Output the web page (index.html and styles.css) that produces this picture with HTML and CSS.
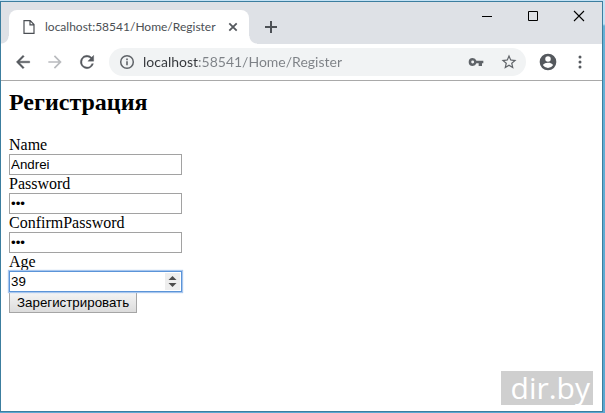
FILE: index.html
```html
<!DOCTYPE html>
<html lang="ru">
<head>
<meta charset="utf-8">
<title>Регистрация</title>
<link rel="stylesheet" href="styles.css">
</head>
<body>
<div class="window">
  <header class="tabstrip">
    <div class="tab">
      <svg class="icon" width="16" height="16" viewBox="0 0 16 16" fill="none" stroke="#4b4f54" stroke-width="1.2"><path d="M3 1.600h6.200L13 5.500v8.900H3zM9 1.800v4h4"/></svg>
      <span class="tab-title">localhost:58541/Home/Register</span>
      <button class="plain" type="button" aria-label="Close tab"><svg width="16" height="16" viewBox="0 0 16 16" stroke="#55595e" stroke-width="1.8"><path d="M4.300 4.300l7.400 7.400M11.700 4.300l-7.400 7.400"/></svg></button>
    </div>
    <button class="plain new-tab" type="button" aria-label="New tab"><svg width="16" height="16" viewBox="0 0 16 16" stroke="#4d5156" stroke-width="2"><path d="M8 2v12M2 8h12"/></svg></button>
    <div class="caption">
      <button class="plain" type="button" aria-label="Minimize"><svg width="12" height="12" viewBox="0 0 12 12" stroke="#000"><path d="M1 6.500h10"/></svg></button>
      <button class="plain" type="button" aria-label="Maximize"><svg width="12" height="12" viewBox="0 0 12 12" fill="none" stroke="#000"><path d="M1.500 1.500h9v9h-9z"/></svg></button>
      <button class="plain" type="button" aria-label="Close"><svg width="12" height="12" viewBox="0 0 12 12" stroke="#000" stroke-width="1.1"><path d="M1 1l10 10M11 1L1 11"/></svg></button>
    </div>
  </header>
  <nav class="toolbar">
    <button class="plain" type="button" aria-label="Back"><svg width="20" height="20" viewBox="0 0 24 24" fill="#55595e"><path d="M20 11H7.800l5.600-5.600L12 4l-8 8 8 8 1.400-1.400L7.800 13H20z" stroke="#55595e" stroke-width=".5"/></svg></button>
    <button class="plain" type="button" aria-label="Forward"><svg width="20" height="20" viewBox="0 0 24 24" fill="#b9bbbe"><path d="M12 4l-1.400 1.400 5.600 5.600H4v2h12.200l-5.600 5.600L12 20l8-8z"/></svg></button>
    <button class="plain" type="button" aria-label="Reload"><svg width="20" height="20" viewBox="0 0 24 24" fill="#55595e"><path d="M17.650 6.350A8 8 0 1 0 19.730 14h-2.080A6 6 0 1 1 12 6c1.660 0 3.140.69 4.220 1.780L13 11h7V4z" stroke="#55595e" stroke-width=".4"/></svg></button>
    <div class="omnibox">
      <svg class="icon" width="16" height="16" viewBox="0 0 16 16"><circle cx="8" cy="8" r="6.300" fill="none" stroke="#5f6368" stroke-width="1.500"/><path d="M7.200 7.200h1.600v4H7.200zM7.200 4.600h1.600v1.600H7.200z" fill="#5f6368"/></svg>
      <input class="url" type="text" aria-label="Address" value="localhost:58541/Home/Register">
      <button class="plain" type="button" aria-label="Saved passwords"><svg width="16" height="16" viewBox="0 0 24 24" fill="#5f6368"><path d="M12.650 10A6 6 0 0 0 7 6a6 6 0 0 0 0 12 6 6 0 0 0 5.650-4H16v4h5v-4h2v-4zM7 14.200a2.200 2.200 0 1 1 0-4.400 2.200 2.200 0 0 1 0 4.400z"/></svg></button>
      <button class="plain" type="button" aria-label="Bookmark"><svg width="18" height="18" viewBox="0 0 24 24" fill="#5f6368"><path d="M22 9.240l-7.190-.62L12 2 9.190 8.630 2 9.240l5.460 4.730L5.820 21 12 17.270 18.180 21l-1.630-7.030zM12 15.400l-3.760 2.270 1-4.280-3.320-2.880 4.380-.38L12 6.100l1.710 4.040 4.380.38-3.320 2.880 1 4.280z"/></svg></button>
    </div>
    <button class="plain" type="button" aria-label="Profile"><svg width="20" height="20" viewBox="0 0 24 24" fill="#55595e"><path d="M12 2a10 10 0 1 0 0 20 10 10 0 0 0 0-20zm0 3a3.300 3.300 0 1 1 0 6.600A3.300 3.300 0 0 1 12 5zm0 14.200a7.200 7.200 0 0 1-6-3.220c.03-1.990 4-3.080 6-3.080s5.970 1.090 6 3.080a7.200 7.200 0 0 1-6 3.220z"/></svg></button>
    <button class="plain menu" type="button" aria-label="Menu"><svg width="16" height="16" viewBox="0 0 16 16" fill="#55595e"><circle cx="8" cy="3" r="1.500"/><circle cx="8" cy="8" r="1.500"/><circle cx="8" cy="13" r="1.500"/></svg></button>
  </nav>
  <main class="page">
    <h2>Регистрация</h2>
    <form>
      <label for="name">Name</label>
      <input class="field" id="name" type="text" value="Andrei">
      <label for="password">Password</label>
      <input class="field" id="password" type="password" value="123">
      <label for="confirm">ConfirmPassword</label>
      <input class="field" id="confirm" type="password" value="123">
      <label for="age">Age</label>
      <div class="number">
        <input class="field active" id="age" type="number" value="39">
        <svg class="spinner" width="15" height="17" viewBox="0 0 15 17"><path fill="#eee" d="M0 0h15v17H0z"/><path fill="#4c4c4c" d="M3.500 7L7.500 3l4 4zM3.500 10h8l-4 4z"/></svg>
      </div>
      <button class="submit" type="submit">Зарегистрировать</button>
    </form>
  </main>
  <div class="watermark">dir.by</div>
</div>
</body>
</html>
```
FILE: styles.css
```css
* {
  box-sizing: border-box;
}

body {
  margin: 0;
  height: 100vh;
  padding: 1px 2px 1px 0;
  background: linear-gradient(#c3e2f5 0, #c3e2f5 24px, #67b1d6 26px, #5ba7d0 100%);
  font-family: "Liberation Serif", serif;
}

.window {
  position: relative;
  display: flex;
  flex-direction: column;
  height: 100%;
  border: 1px solid #3c7e9f;
  background: #fff;
}

.icon {
  flex: none;
}

.plain {
  display: flex;
  flex: none;
  align-items: center;
  justify-content: center;
  padding: 0;
  border: 0;
  background: none;
}

.tabstrip {
  display: flex;
  height: 42px;
  padding: 8px 0 0 8px;
  background: #dee1e6;
}

.tab {
  position: relative;
  display: flex;
  align-items: center;
  gap: 8px;
  width: 240px;
  padding: 0 8px 0 12px;
  border-radius: 8px 8px 0 0;
  background: #fff;
}

.tab::before,
.tab::after {
  content: "";
  position: absolute;
  bottom: 0;
  width: 8px;
  height: 8px;
}

.tab::before {
  right: 100%;
  background: radial-gradient(circle at 0 0, transparent 7px, #fff 8px);
}

.tab::after {
  left: 100%;
  background: radial-gradient(circle at 100% 0, transparent 7px, #fff 8px);
}

.tab-title {
  flex: 1;
  white-space: nowrap;
  color: #4b4f54;
  font: 12px/16px Lato, sans-serif;
}

.new-tab {
  width: 44px;
}

.caption {
  display: flex;
  align-items: flex-start;
  margin-left: auto;
}

.caption .plain {
  width: 46px;
  height: 12px;
}

.toolbar {
  display: flex;
  align-items: center;
  gap: 12px;
  height: 37px;
  padding: 0 14px 0 12px;
  border-bottom: 1px solid #a9a9a9;
}

.omnibox {
  display: flex;
  flex: 1;
  align-items: center;
  gap: 8px;
  min-width: 0;
  height: 28px;
  padding: 0 8px 0 10px;
  border-radius: 14px;
  background: #f1f3f4;
}

.omnibox .plain + .plain {
  margin-left: 8px;
}

.menu {
  margin-left: 2px;
}

.url {
  flex: 1;
  min-width: 0;
  padding: 0;
  border: 0;
  outline: 0;
  /* host in dark text, port and path in grey */
  background: linear-gradient(90deg, #33363a 56px, #7d8186 56px) text;
  color: transparent;
  font: 14px/20px Lato, sans-serif;
}

.page {
  padding: 8px;
  color: #000;
}

h2 {
  margin: 0 0 20px;
  font-size: 24px;
  line-height: 27px;
}

label {
  display: block;
  font-size: 16px;
  line-height: 18px;
}

.field,
.submit {
  display: block;
  height: 21px;
  color: #000;
  font-family: "Liberation Sans", sans-serif;
}

.field {
  width: 173px;
  padding: 1px;
  border: 1px solid #a2a2a2;
  outline: 0;
  background: #fff;
}

.active {
  border-color: #5b94d8;
  box-shadow: 0 0 1px 1px #a9c7ee;
}

.number {
  position: relative;
  width: 173px;
}

.number .field {
  appearance: textfield;
}

.number .field::-webkit-inner-spin-button {
  appearance: none;
}

.spinner {
  position: absolute;
  top: 2px;
  right: 2px;
}

.submit {
  padding: 0 7px;
  border: 1px solid #a5a5a5;
  background: linear-gradient(#f4f4f4, #dcdcdc);
}

.watermark {
  position: absolute;
  right: 9px;
  bottom: 6px;
  padding: 0 3px 0 10px;
  background: #cfcfcf;
  color: #fff;
  font: 30px/34px "Open Sans", sans-serif;
}
```
